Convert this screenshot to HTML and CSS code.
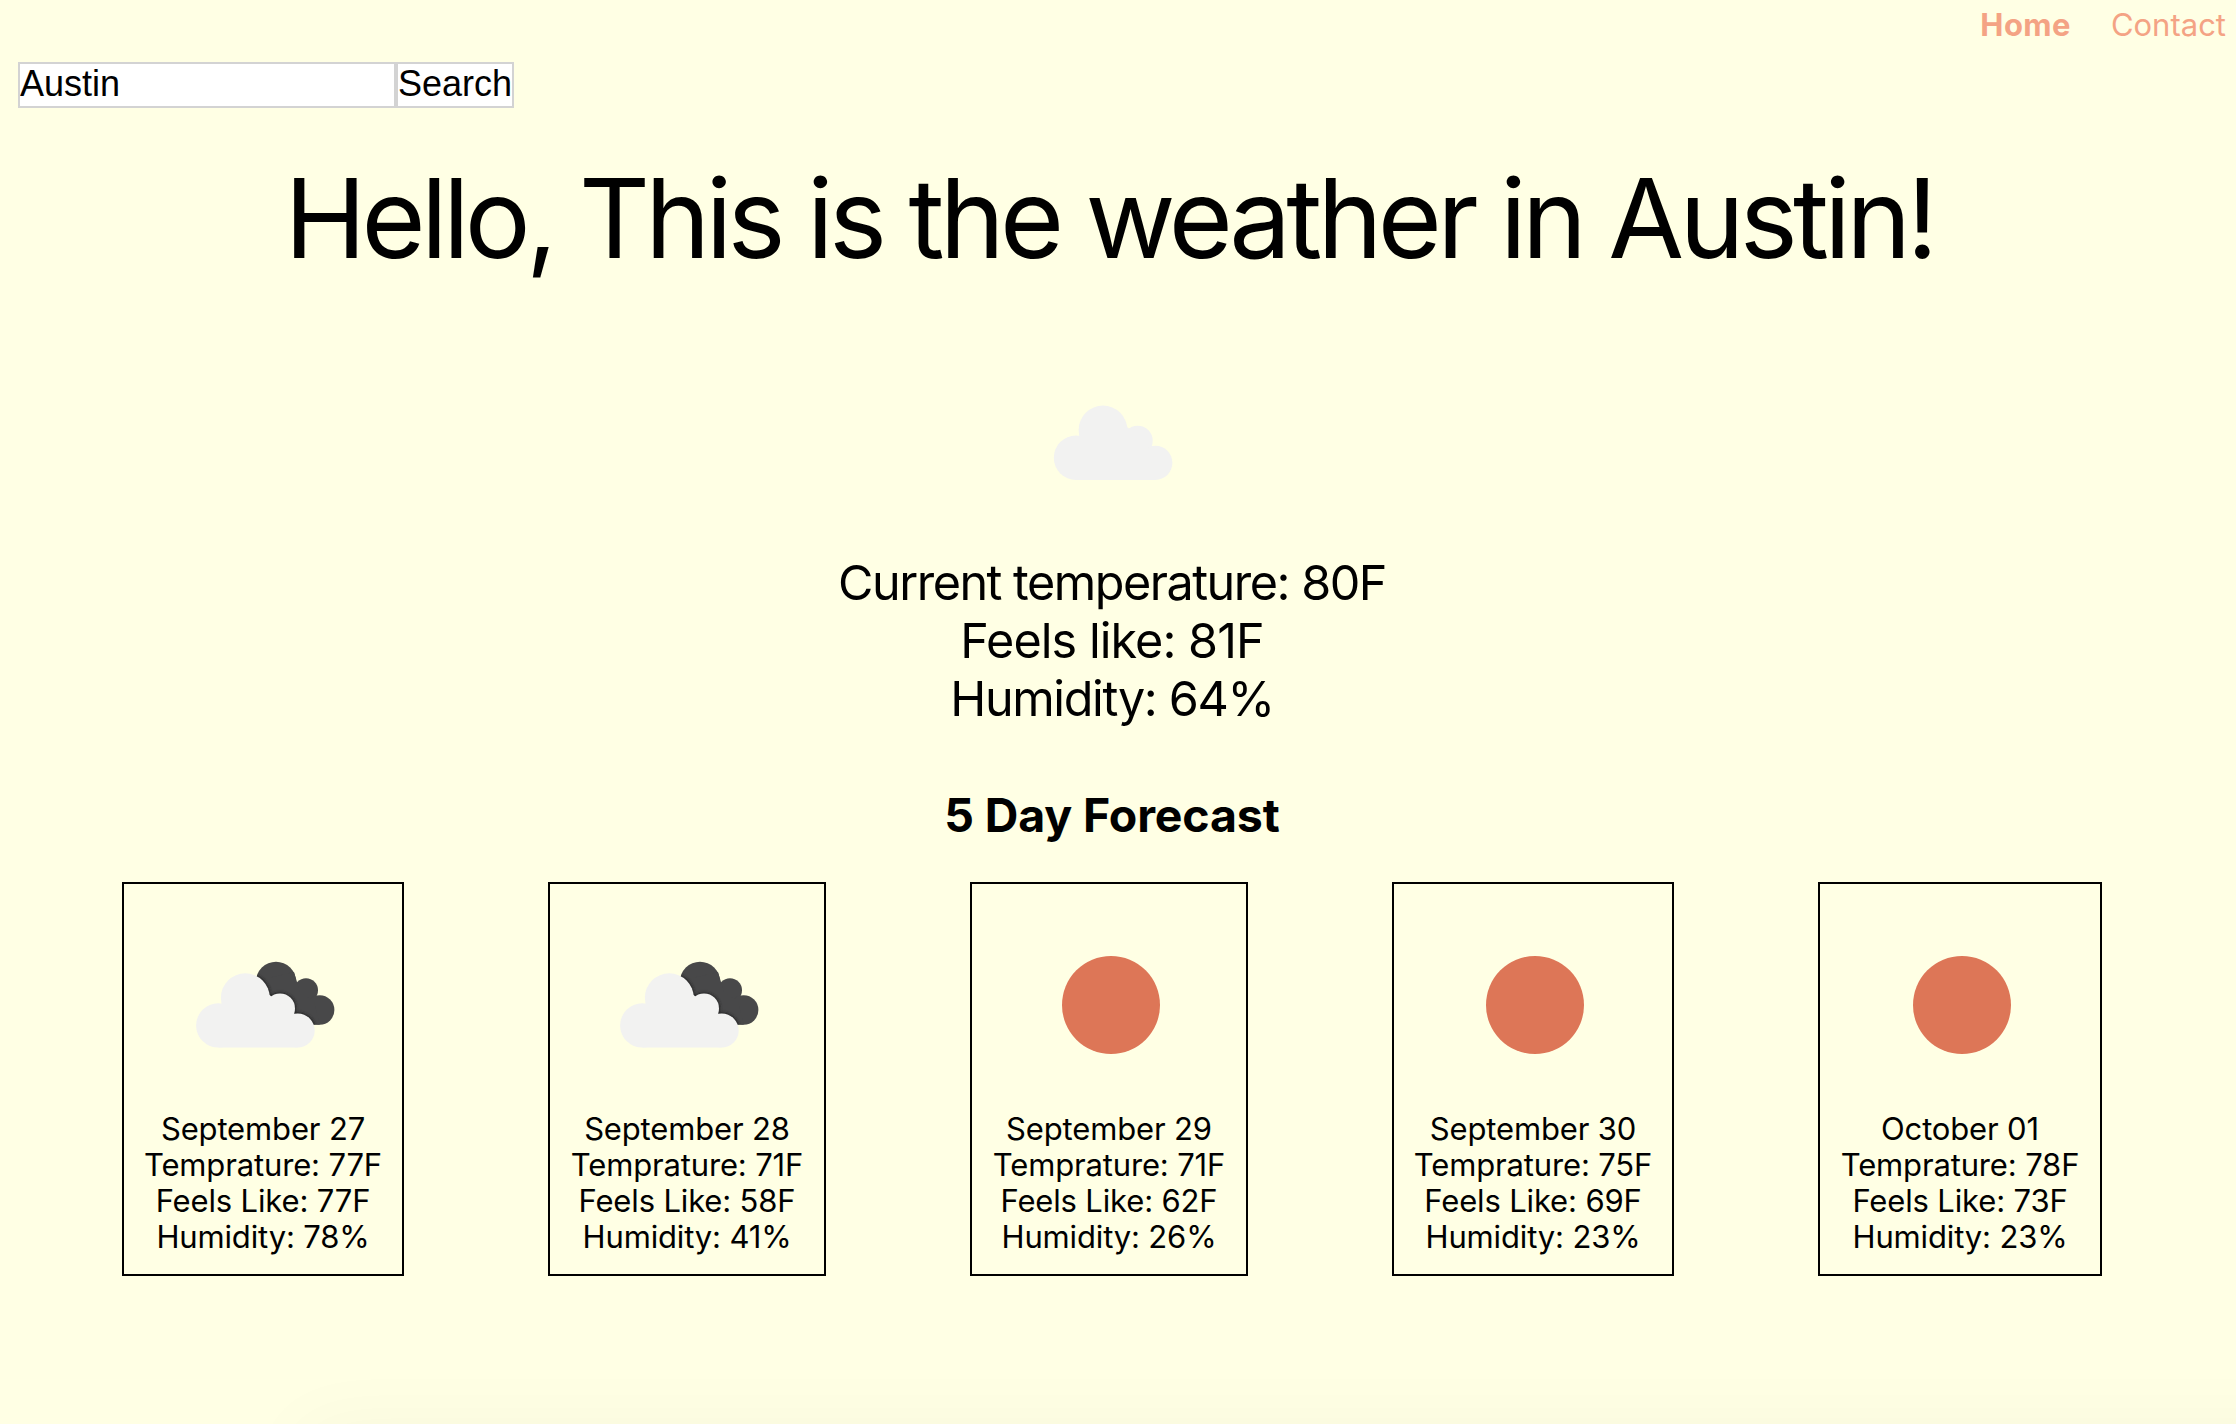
FILE: index.html
```html
<!DOCTYPE html>
<html lang="en">
<head>
<meta charset="utf-8">
<title>Weather</title>
<link rel="stylesheet" href="styles.css">
</head>
<body>
<svg class="defs" width="0" height="0">
  <defs>
    <g id="cloud">
      <circle cx="46" cy="67.7" r="22.2"/><circle cx="73" cy="40" r="24.4"/>
      <circle cx="107.7" cy="50.7" r="15"/><circle cx="125.3" cy="72.8" r="17.1"/>
      <path d="M46 89.9V50L58 36h38l22 20 7.3 33.9z"/>
    </g>
    <g id="dark-cloud">
      <circle cx="166" cy="111.7" r="20"/><circle cx="196" cy="120.3" r="12"/><circle cx="209.7" cy="140" r="14.7"/>
      <path d="M150 110l34-8 6 20 14 10 5.7 22.7H160z"/>
    </g>
    <clipPath id="dark-clip">
      <circle cx="166" cy="111.7" r="20"/><circle cx="196" cy="120.3" r="12"/><circle cx="209.7" cy="140" r="14.7"/>
      <path d="M150 110l34-8 6 20 14 10 5.7 22.7H160z"/>
    </clipPath>
    <filter id="soft"><feGaussianBlur stdDeviation="1.8"/></filter>
    <symbol id="broken-clouds" viewBox="62 82 170 110">
      <use href="#dark-cloud" fill="#484849"/>
      <g clip-path="url(#dark-clip)"><g filter="url(#soft)"><use href="#cloud" x="62.3" y="87.7" fill="#222" stroke="#222" stroke-width="2"/></g></g>
      <use href="#cloud" x="62.3" y="87.7" fill="#f2f2f1"/>
    </symbol>
  </defs>
</svg>
<nav class="nav"><a class="active">Home</a><a>Contact</a></nav>
<form class="search"><input class="city" type="text" value="Austin"><button class="go" type="button">Search</button></form>
<main class="main">
  <h1 class="title">Hello, This is the weather in Austin!</h1>
  <svg class="current-icon" viewBox="0 0 170 110"><use href="#cloud" fill="#f2f2f1"/></svg>
  <div class="current"><p class="temp">Current temperature: 80F</p><p class="feels">Feels like: 81F</p><p class="humidity">Humidity: 64%</p></div>
  <h2 class="subtitle">5 Day Forecast</h2>
  <section class="days">
    <article class="day"><svg class="clouds" viewBox="0 0 170 110"><use href="#broken-clouds" width="170" height="110"/></svg><p>September 27</p><p>Temprature: 77F</p><p>Feels Like: 77F</p><p>Humidity: 78%</p></article>
    <article class="day narrow"><svg class="clouds" viewBox="0 0 170 110"><use href="#broken-clouds" width="170" height="110"/></svg><p>September 28</p><p>Temprature: 71F</p><p>Feels Like: 58F</p><p>Humidity: 41%</p></article>
    <article class="day narrow"><svg class="sun" viewBox="0 0 98 98"><circle cx="49" cy="49" r="49"/></svg><p>September 29</p><p>Temprature: 71F</p><p>Feels Like: 62F</p><p>Humidity: 26%</p></article>
    <article class="day"><svg class="sun" viewBox="0 0 98 98"><circle cx="49" cy="49" r="49"/></svg><p>September 30</p><p>Temprature: 75F</p><p>Feels Like: 69F</p><p>Humidity: 23%</p></article>
    <article class="day wide"><svg class="sun" viewBox="0 0 98 98"><circle cx="49" cy="49" r="49"/></svg><p>October 01</p><p>Temprature: 78F</p><p>Feels Like: 73F</p><p>Humidity: 23%</p></article>
  </section>
</main>
</body>
</html>
```
FILE: styles.css
```css
* { box-sizing: border-box; margin: 0; padding: 0; }
body { height: 1424px; overflow: hidden; background: #ffffe4; color: #000; font-family: Inter, sans-serif; }
/* faint shadow rising from below the window edge */
body::after { content: ""; position: fixed; left: 300px; top: 1424px; width: 2400px; height: 200px; border-radius: 20px; box-shadow: 0 0 76px rgba(0, 0, 0, .035); }
.defs { display: block; height: 0; }
.nav { display: flex; justify-content: flex-end; gap: 40px; height: 62px; padding: 5px 10px 0 0; font-size: 31px; line-height: 40px; color: #f4a384; }
.active { font-weight: 700; letter-spacing: .4px; }
.search { display: flex; width: 496px; height: 46px; margin-left: 18px; }
.city, .go { border: 2px solid #d3d3d3; background: #fff; color: #000; font: 36px/40px "Liberation Sans", Arial, sans-serif; border-radius: 0; }
.city { width: 378px; padding-bottom: 2px; }
.go { width: 118px; padding-bottom: 2px; white-space: nowrap; }
.main { display: flex; flex-direction: column; align-items: center; width: 2224px; }
.title { height: 132px; margin-top: 44px; margin-left: -6px; font-size: 110px; line-height: 132px; font-weight: 400; letter-spacing: -4.75px; white-space: nowrap; }
.current-icon { width: 170px; height: 110px; margin-top: 106px; margin-left: 6px; }
.current { margin-top: 54px; font-size: 48.5px; line-height: 58px; text-align: center; }
.temp { letter-spacing: -1.5px; }
.feels { letter-spacing: -.95px; }
.humidity { letter-spacing: -1.35px; }
.subtitle { margin-top: 58px; font-size: 46.5px; line-height: 58px; letter-spacing: -.15px; }
.days { display: flex; align-items: flex-start; gap: 144px; margin-top: 38px; }
.day { display: flex; flex-direction: column; align-items: center; width: 282px; height: 394px; border: 2px solid #000; font-size: 31px; line-height: 36px; letter-spacing: -.15px; white-space: nowrap; }
.narrow { width: 278px; }
.wide { width: 284px; }
.clouds { width: 170px; height: 110px; margin: 68px 12px 49px 0; }
.sun { width: 98px; height: 98px; margin: 72px 0 57px 4px; fill: #dd7657; }
```
